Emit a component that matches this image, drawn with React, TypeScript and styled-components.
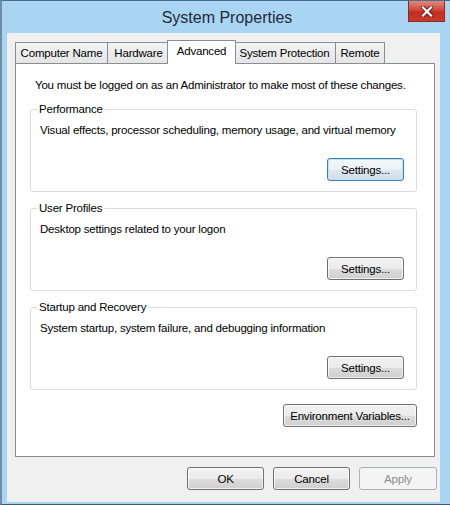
import { FC } from 'react';
import styled, { createGlobalStyle, css } from 'styled-components';

const GlobalStyle = createGlobalStyle`
  html, body {
    margin: 0;
    padding: 0;
    background: #ffffff;
  }
  * {
    box-sizing: border-box;
  }
`;

const font = `'Liberation Sans', Arial, sans-serif`;

const StyledWindow = styled.div`
  width: 450px;
  height: 505px;
  display: flex;
  flex-direction: column;
  background: #a9d4f2;
  border-top: 1px solid #4c6e8c;
  border-left: 2px solid #6f8ca6;
  border-bottom: 1px solid #3f5870;
  font-family: ${font};
  font-size: 11.5px;
  letter-spacing: -0.2px;
  color: #000;
  overflow: hidden;
`;

const StyledTitleBar = styled.div`
  height: 32px;
  flex-shrink: 0;
  display: grid;
  grid-template-columns: 1fr auto 1fr;
  align-items: center;
`;

const StyledTitle = styled.div`
  grid-column: 2;
  font-size: 16px;
  letter-spacing: 0;
  color: #1e2b38;
  padding-left: 2px;
  margin-top: 1px;
`;

const StyledClose = styled.div`
  grid-column: 3;
  justify-self: end;
  align-self: start;
  width: 37px;
  height: 21px;
  margin-right: 5px;
  display: flex;
  align-items: center;
  justify-content: center;
  background: linear-gradient(#e08a80 0%, #d2473a 45%, #c22d1f 55%, #c9392b 100%);
  border: 1px solid #8e2a20;
  border-top: none;
`;

const StyledClient = styled.div`
  flex: 1;
  display: flex;
  flex-direction: column;
  margin: 0 10px 2px 5px;
  padding: 7px 3px 0 8px;
  background: #f0f0f0;
`;

const StyledTabs = styled.div`
  display: flex;
  align-items: flex-end;
  height: 23px;
  position: relative;
  z-index: 1;
`;

const StyledTab = styled.div<{ $active?: boolean; $width: number }>`
  width: ${({ $width }) => $width}px;
  height: 21px;
  display: flex;
  align-items: center;
  justify-content: center;
  border: 1px solid #898c95;
  border-bottom: none;
  margin-left: -1px;
  background: linear-gradient(#f3f3f3, #e5e5e5);
  white-space: nowrap;

  &:first-child {
    margin-left: 0;
  }

  ${({ $active }) =>
    $active &&
    css`
      height: 24px;
      margin: 0 -2px -1px -3px;
      padding-bottom: 3px;
      background: #ffffff;
      position: relative;
      z-index: 2;
    `}
`;

const StyledPanel = styled.div`
  width: 420px;
  height: 394px;
  flex-shrink: 0;
  background: #ffffff;
  border: 1px solid #898c95;
  padding: 14px 17px 0 14px;
  display: flex;
  flex-direction: column;
`;

const StyledNote = styled.div`
  padding-left: 5px;
  line-height: 15px;
  margin-bottom: 9px;
  white-space: nowrap;
`;

const StyledGroup = styled.fieldset`
  margin: 0 0 9px;
  padding: 6px 12px 9px 9px;
  height: 90px;
  min-width: 0;
  border: 1px solid #dcdcdc;
  border-radius: 3px;
  display: flex;
  flex-direction: column;
`;

const StyledLegend = styled.legend`
  padding: 0 2px;
  margin-left: -3px;
  line-height: 15px;
`;

const StyledDescription = styled.div`
  line-height: 15px;
  white-space: nowrap;
`;

const StyledButtonRow = styled.div<{ $top?: number }>`
  display: flex;
  justify-content: flex-end;
  gap: 9px;
  margin-top: ${({ $top }) => $top ?? 0}px;
`;

const StyledButton = styled.button<{ $primary?: boolean; $width?: number }>`
  width: ${({ $width }) => $width ?? 77}px;
  height: 23px;
  padding: 0;
  font-family: ${font};
  font-size: 11.5px;
  letter-spacing: -0.2px;
  color: #000;
  border: 1px solid #707070;
  border-radius: 3px;
  background: linear-gradient(#f2f2f2 0%, #ebebeb 50%, #dddddd 51%, #cfcfcf 100%);
  box-shadow: inset 0 0 0 1px rgba(255, 255, 255, 0.7);

  ${({ $primary }) =>
    $primary &&
    css`
      border-color: #3c7fb1;
      box-shadow: inset 0 0 0 1px #bfe2f8;
      background: linear-gradient(#f4f8fb 0%, #eaf1f6 50%, #dde7ef 51%, #d2dde7 100%);
    `}

  &:disabled {
    color: #8d8d8d;
    border-color: #adb2b5;
    background: #f4f4f4;
    box-shadow: none;
  }
`;

const StyledFooter = styled(StyledButtonRow)`
  margin-top: 10px;
`;

interface GroupProps {
  title: string;
  text: string;
  primary?: boolean;
}

const Group: FC<GroupProps> = ({ title, text, primary }) => (
  <StyledGroup>
    <StyledLegend>{title}</StyledLegend>
    <StyledDescription>{text}</StyledDescription>
    <StyledButtonRow $top={20}>
      <StyledButton $primary={primary}>Settings...</StyledButton>
    </StyledButtonRow>
  </StyledGroup>
);

const tabs = [
  { title: 'Computer Name', width: 93 },
  { title: 'Hardware', width: 63 },
  { title: 'Advanced', width: 69, active: true },
  { title: 'System Protection', width: 103 },
  { title: 'Remote', width: 50 },
];

const groups: GroupProps[] = [
  {
    title: 'Performance',
    text: 'Visual effects, processor scheduling, memory usage, and virtual memory',
    primary: true,
  },
  { title: 'User Profiles', text: 'Desktop settings related to your logon' },
  {
    title: 'Startup and Recovery',
    text: 'System startup, system failure, and debugging information',
  },
];

export default function App() {
  return (
    <>
      <GlobalStyle />
      <StyledWindow>
        <StyledTitleBar>
          <StyledTitle>System Properties</StyledTitle>
          <StyledClose>
            <svg width="12" height="11" viewBox="0 0 12 11">
              <path
                d="M2 1.5 L10 9.5 M10 1.5 L2 9.5"
                stroke="#5a1a14"
                strokeWidth="4"
                strokeLinecap="square"
              />
              <path
                d="M2 1.5 L10 9.5 M10 1.5 L2 9.5"
                stroke="#ffffff"
                strokeWidth="2.2"
                strokeLinecap="square"
              />
            </svg>
          </StyledClose>
        </StyledTitleBar>
        <StyledClient>
          <StyledTabs>
            {tabs.map((tab) => (
              <StyledTab key={tab.title} $active={tab.active} $width={tab.width}>
                {tab.title}
              </StyledTab>
            ))}
          </StyledTabs>
          <StyledPanel>
            <StyledNote>
              You must be logged on as an Administrator to make most of these changes.
            </StyledNote>
            {groups.map((group) => (
              <Group key={group.title} {...group} />
            ))}
            <StyledButtonRow $top={5}>
              <StyledButton $width={134}>Environment Variables...</StyledButton>
            </StyledButtonRow>
          </StyledPanel>
          <StyledFooter>
            <StyledButton>OK</StyledButton>
            <StyledButton>Cancel</StyledButton>
            <StyledButton $width={78} disabled>
              Apply
            </StyledButton>
          </StyledFooter>
        </StyledClient>
      </StyledWindow>
    </>
  );
}
